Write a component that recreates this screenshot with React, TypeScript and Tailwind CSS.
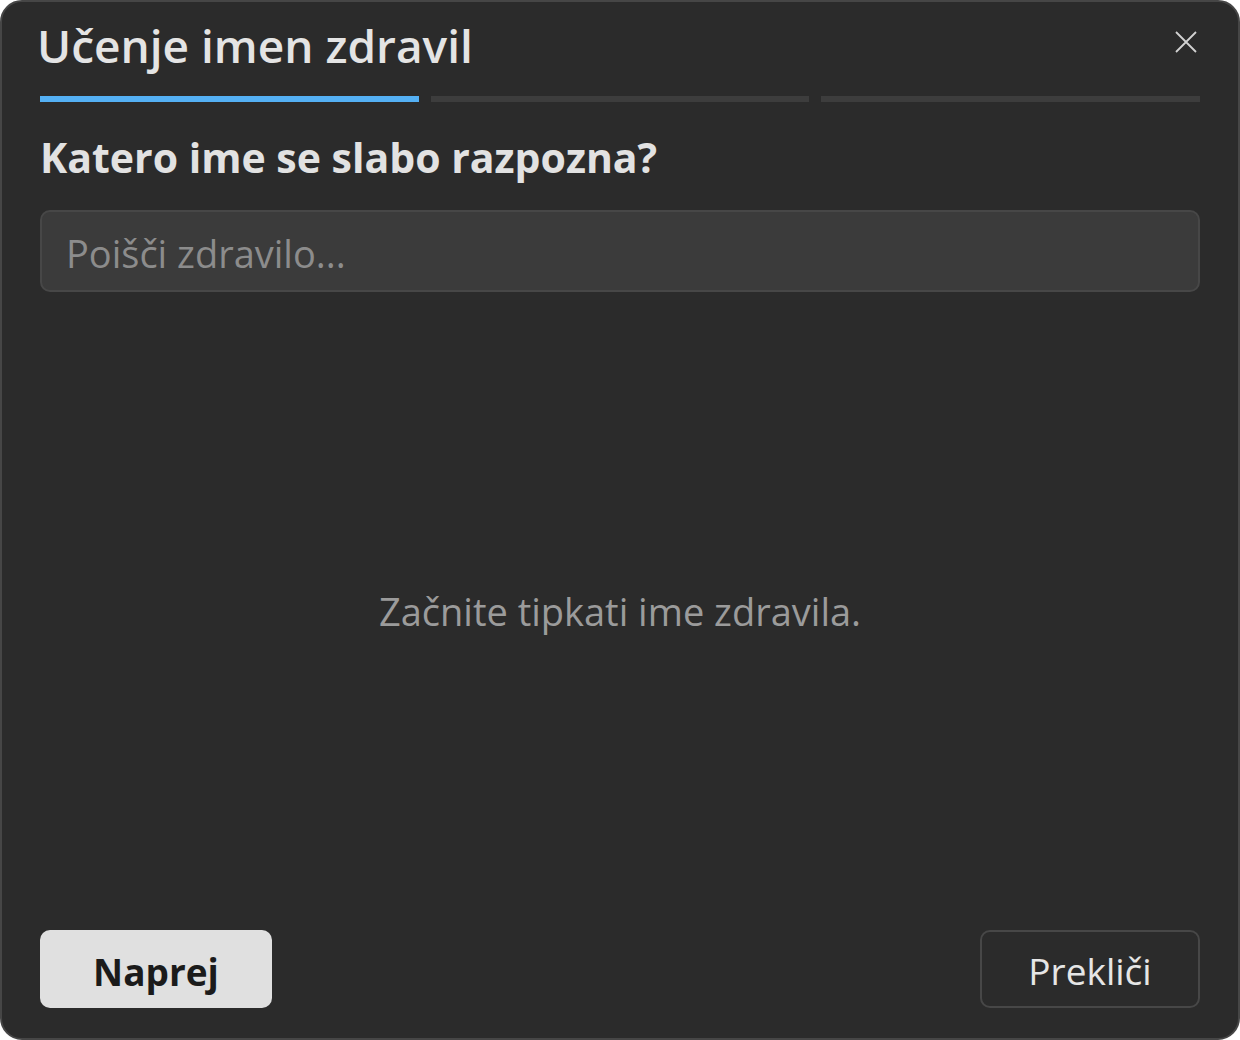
export default function App() {
  return (
    <div className="h-[1040px] w-[1240px] bg-white" style={{ fontFamily: '"Open Sans", "Noto Sans", sans-serif' }}>
      <div className="flex h-full flex-col rounded-[22px] border-2 border-[#464646] bg-[#2b2b2b] px-[38px] pb-[30px]">
        {/* Header */}
        <div className="flex items-start justify-between pt-[15px]">
          <h1 className="ml-[-3px] text-[46px] font-semibold leading-[56px] text-[#e4e4e4]">Učenje imen zdravil</h1>
          <button className="mr-[3px] mt-[14px] text-[#d2d2d2]">
            <svg width="22" height="22" viewBox="0 0 22 22" fill="none" stroke="currentColor" strokeWidth="1.8">
              <path d="M1 1L21 21M21 1L1 21" />
            </svg>
          </button>
        </div>

        {/* Progress */}
        <div className="mt-[23px] grid grid-cols-3 gap-3">
          <div className="h-[6px] bg-[#54b0f4]" />
          <div className="h-[6px] bg-[#3d3d3d]" />
          <div className="h-[6px] bg-[#3d3d3d]" />
        </div>

        <h2 className="mt-[30px] text-[41px] font-bold leading-[50px] text-[#e2e2e2]">Katero ime se slabo razpozna?</h2>

        <input
          type="text"
          placeholder="Poišči zdravilo..."
          className="mt-[28px] h-[82px] w-full rounded-[10px] border-2 border-[#474747] bg-[#3b3b3b] px-[24px] pt-[4px] text-[38px] text-[#e2e2e2] outline-none placeholder:text-[#8c8c8c]"
        />

        <div className="flex flex-1 items-center justify-center">
          <p className="text-[38px] text-[#9b9b9b]">Začnite tipkati ime zdravila.</p>
        </div>

        {/* Footer */}
        <div className="flex items-center justify-between">
          <button className="h-[78px] w-[232px] rounded-[10px] bg-[#e0e0e0] pt-[5px] text-[37px] font-bold text-[#1b1b1b]">Naprej</button>
          <button className="h-[78px] w-[220px] rounded-[10px] border-2 border-[#474747] pt-[4px] text-[37px] text-[#e6e6e6]">Prekliči</button>
        </div>
      </div>
    </div>
  );
}
